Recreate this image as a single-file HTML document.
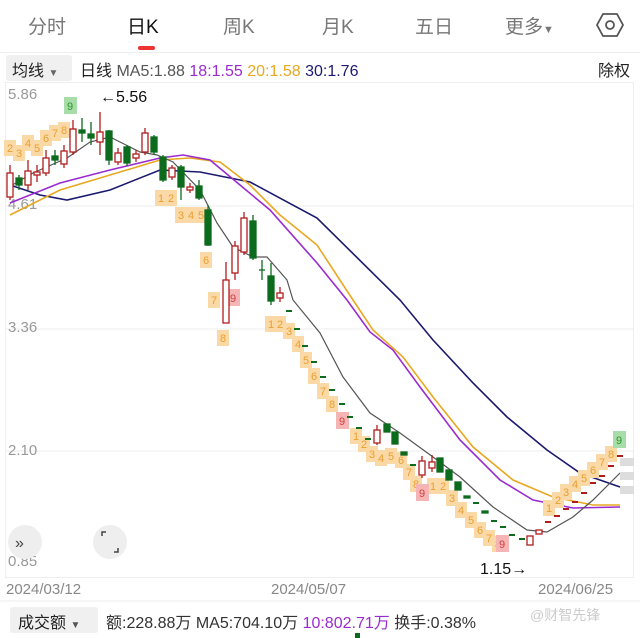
<!DOCTYPE html>
<html><head><meta charset="utf-8"><style>
body{margin:0;width:640px;height:638px;background:#fff;overflow:hidden;font-family:"Liberation Sans","Noto Sans CJK SC",sans-serif;position:relative}
.a{position:absolute;white-space:nowrap}
</style></head><body>
<div class="a" style="left:28px;top:12px;font-size:19px;color:#777">分时</div>
<div class="a" style="left:127px;top:12px;font-size:19px;color:#111">日K</div>
<div class="a" style="left:138px;top:46px;width:17px;height:4px;background:#e33;border-radius:2px"></div>
<div class="a" style="left:223px;top:12px;font-size:19px;color:#777">周K</div>
<div class="a" style="left:322px;top:12px;font-size:19px;color:#777">月K</div>
<div class="a" style="left:415px;top:12px;font-size:19px;color:#777">五日</div>
<div class="a" style="left:505px;top:12px;font-size:19px;color:#777">更多<span style="font-size:11px">▼</span></div>
<svg class="a" style="left:595px;top:10px" width="30" height="30"><polygon points="8,4 22,4 28,15 22,26 8,26 2,15" fill="none" stroke="#555" stroke-width="1.8"/><circle cx="15" cy="15" r="4" fill="none" stroke="#555" stroke-width="1.8"/></svg>
<div class="a" style="left:0;top:52px;width:640px;height:1px;background:#eee"></div>
<div class="a" style="left:6px;top:55px;width:66px;height:26px;background:#f0f0f0;border-radius:3px"></div>
<div class="a" style="left:12px;top:57px;font-size:16px;color:#222">均线 <span style="font-size:10px;color:#666">▼</span></div>
<div class="a" style="left:80px;top:57px;font-size:16px;color:#222">日线 <span style="color:#555">MA5:1.88</span> <span style="color:#9a2bd0">18:1.55</span> <span style="color:#e8a820">20:1.58</span> <span style="color:#1c1a6e">30:1.76</span></div>
<div class="a" style="left:598px;top:57px;font-size:16px;color:#222">除权</div>
<svg class="a" style="left:0;top:0" width="640" height="638">
<rect x="5.5" y="82.5" width="628" height="495" fill="none" stroke="#eee"/>
<g stroke="#eee"><line x1="6" y1="206" x2="633" y2="206"/><line x1="6" y1="329" x2="633" y2="329"/><line x1="6" y1="451" x2="633" y2="451"/></g>
<g font-size="15" fill="#999"><text x="8" y="99">5.86</text><text x="8" y="209">4.61</text><text x="8" y="332">3.36</text><text x="8" y="455">2.10</text><text x="8" y="566">0.85</text></g>
<text x="100" y="102" font-size="16" fill="#111">←5.56</text>
<text x="480" y="574" font-size="16" fill="#111">1.15→</text>
<g fill="none" stroke-width="1.6">
<polyline stroke="#1c1a6e" points="10,185 40,195 67,200 110,190 160,170 200,172 250,182 317,218 400,300 433,340 473,383 507,417 547,450 580,473 620,487"/>
<polyline stroke="#e8a820" points="10,215 60,190 110,175 160,160 190,158 220,162 250,185 280,215 317,245 353,300 373,330 403,357 433,397 473,447 513,480 553,497 593,505 620,505"/>
<polyline stroke="#9a2bd0" points="10,203 60,183 110,170 160,158 183,155 210,160 240,185 270,210 317,263 347,300 370,332 393,350 420,387 460,440 500,480 533,500 573,508 620,507"/>
<polyline stroke="#555" stroke-width="1.2" points="7,188 33,173 67,158 90,142 110,137 140,152 157,155 173,162 200,190 217,223 233,247 253,257 267,257 287,280 293,300 320,333 343,377 370,413 400,433 433,457 460,477 493,507 527,530 547,532 573,517 593,500 620,473"/>
</g>
<g font-size="11" text-anchor="middle">
<g fill="#fbd9a6"><rect x="4" y="140" width="12" height="16"/><rect x="13" y="145" width="12" height="16"/><rect x="22" y="135" width="12" height="16"/><rect x="31" y="140" width="12" height="16"/><rect x="40" y="130" width="12" height="16"/><rect x="49" y="125" width="12" height="16"/><rect x="58" y="122" width="12" height="16"/>
<rect x="155" y="190" width="12" height="16"/><rect x="165" y="190" width="12" height="16"/><rect x="175" y="207" width="12" height="16"/><rect x="185" y="207" width="12" height="16"/><rect x="195" y="207" width="12" height="16"/><rect x="200" y="252" width="12" height="16"/><rect x="208" y="292" width="12" height="16"/><rect x="217" y="330" width="12" height="16"/>
<rect x="265" y="316" width="12" height="16"/><rect x="274" y="316" width="12" height="16"/><rect x="283" y="323" width="12" height="16"/><rect x="292" y="336" width="12" height="16"/><rect x="300" y="352" width="12" height="16"/><rect x="308" y="368" width="12" height="16"/><rect x="317" y="383" width="12" height="16"/><rect x="326" y="396" width="12" height="16"/>
<rect x="350" y="428" width="12" height="16"/><rect x="358" y="436" width="12" height="16"/><rect x="366" y="446" width="12" height="16"/><rect x="375" y="450" width="12" height="16"/><rect x="385" y="448" width="12" height="16"/><rect x="395" y="452" width="12" height="16"/><rect x="403" y="464" width="12" height="16"/><rect x="410" y="476" width="12" height="16"/><rect x="427" y="478" width="12" height="16"/><rect x="437" y="478" width="12" height="16"/><rect x="446" y="490" width="12" height="16"/><rect x="455" y="502" width="12" height="16"/><rect x="465" y="512" width="12" height="16"/><rect x="474" y="522" width="12" height="16"/><rect x="483" y="530" width="12" height="16"/><rect x="492" y="536" width="12" height="16"/>
<rect x="543" y="500" width="12" height="16"/><rect x="552" y="492" width="12" height="16"/><rect x="560" y="484" width="12" height="16"/><rect x="569" y="476" width="12" height="16"/><rect x="578" y="470" width="12" height="16"/><rect x="587" y="462" width="12" height="16"/><rect x="596" y="454" width="12" height="16"/><rect x="605" y="446" width="12" height="16"/></g>
<g fill="#e8a030"><text x="10" y="152">2</text><text x="19" y="157">3</text><text x="28" y="147">4</text><text x="37" y="152">5</text><text x="46" y="142">6</text><text x="55" y="137">7</text><text x="64" y="134">8</text>
<text x="161" y="202">1</text><text x="171" y="202">2</text><text x="181" y="219">3</text><text x="191" y="219">4</text><text x="201" y="219">5</text><text x="206" y="264">6</text><text x="214" y="304">7</text><text x="223" y="342">8</text>
<text x="271" y="328">1</text><text x="280" y="328">2</text><text x="289" y="335">3</text><text x="298" y="348">4</text><text x="306" y="364">5</text><text x="314" y="380">6</text><text x="323" y="395">7</text><text x="332" y="408">8</text>
<text x="356" y="440">1</text><text x="364" y="448">2</text><text x="372" y="458">3</text><text x="381" y="462">4</text><text x="391" y="460">5</text><text x="401" y="464">6</text><text x="409" y="476">7</text><text x="416" y="488">8</text><text x="433" y="490">1</text><text x="443" y="490">2</text><text x="452" y="502">3</text><text x="461" y="514">4</text><text x="471" y="524">5</text><text x="480" y="534">6</text><text x="489" y="542">7</text><text x="498" y="548">8</text>
<text x="549" y="512">1</text><text x="558" y="504">2</text><text x="566" y="496">3</text><text x="575" y="488">4</text><text x="584" y="482">5</text><text x="593" y="474">6</text><text x="602" y="466">7</text><text x="611" y="458">8</text></g>
<rect x="64" y="97" width="13" height="17" fill="#a8dca8"/><text x="70" y="110" fill="#2a9a2a">9</text>
<rect x="613" y="431" width="13" height="17" fill="#a8dca8"/><text x="619" y="444" fill="#2a9a2a">9</text>
<g fill="#f5b5b5"><rect x="227" y="289" width="13" height="17"/><rect x="336" y="412" width="13" height="17"/><rect x="416" y="484" width="13" height="17"/><rect x="496" y="535" width="13" height="17"/></g>
<g fill="#d24040"><text x="233" y="302">9</text><text x="342" y="425">9</text><text x="422" y="497">9</text><text x="502" y="548">9</text></g>
</g>
<g stroke="#b01c1c" stroke-width="1.3" fill="#fff">
<line x1="10" y1="165" x2="10" y2="200"/><rect x="7" y="173" width="6" height="24"/>
<line x1="28" y1="160" x2="28" y2="190"/><rect x="25" y="171" width="6" height="14"/>
<line x1="37" y1="165" x2="37" y2="182"/><rect x="34" y="172" width="6" height="3"/>
<line x1="46" y1="150" x2="46" y2="176"/><rect x="43" y="158" width="6" height="15"/>
<line x1="64" y1="145" x2="64" y2="168"/><rect x="61" y="151" width="6" height="13"/>
<line x1="73" y1="120" x2="73" y2="155"/><rect x="70" y="129" width="6" height="23"/>
<line x1="100" y1="112" x2="100" y2="155"/><rect x="97" y="132" width="6" height="10"/>
<line x1="118" y1="148" x2="118" y2="165"/><rect x="115" y="153" width="6" height="9"/>
<line x1="136" y1="150" x2="136" y2="162"/><rect x="133" y="154" width="6" height="4"/>
<line x1="145" y1="128" x2="145" y2="155"/><rect x="142" y="133" width="6" height="19"/>
<line x1="172" y1="165" x2="172" y2="180"/><rect x="169" y="168" width="6" height="9"/>
<line x1="190" y1="183" x2="190" y2="193"/><rect x="187" y="187" width="6" height="3"/>
<line x1="226" y1="262" x2="226" y2="323"/><rect x="223" y="280" width="6" height="43"/>
<line x1="235" y1="241" x2="235" y2="280"/><rect x="232" y="246" width="6" height="27"/>
<line x1="244" y1="212" x2="244" y2="255"/><rect x="241" y="218" width="6" height="34"/>
<line x1="280" y1="287" x2="280" y2="302"/><rect x="277" y="293" width="6" height="5"/>
<line x1="377" y1="425" x2="377" y2="445"/><rect x="374" y="430" width="6" height="13"/>
<line x1="422" y1="456" x2="422" y2="478"/><rect x="419" y="461" width="6" height="14"/>
<line x1="432" y1="455" x2="432" y2="472"/><rect x="429" y="462" width="6" height="6"/>
<rect x="527" y="536" width="6" height="9"/><rect x="536" y="530" width="6" height="4"/>
</g>
<g stroke="#b01c1c" stroke-width="2"><line x1="545" y1="522" x2="551" y2="522"/><line x1="554" y1="516" x2="560" y2="516"/><line x1="563" y1="509" x2="569" y2="509"/><line x1="572" y1="502" x2="578" y2="502"/><line x1="581" y1="493" x2="587" y2="493"/><line x1="590" y1="483" x2="596" y2="483"/><line x1="599" y1="476" x2="605" y2="476"/><line x1="608" y1="466" x2="614" y2="466"/><line x1="617" y1="456" x2="623" y2="456"/></g>
<g stroke="#0d6b1e" stroke-width="1.3" fill="#0d6b1e">
<line x1="19" y1="175" x2="19" y2="190"/><rect x="16" y="178" width="6" height="7"/>
<line x1="55" y1="150" x2="55" y2="165"/><rect x="52" y="156" width="6" height="4"/>
<line x1="82" y1="118" x2="82" y2="142"/><rect x="79" y="130" width="6" height="3"/>
<line x1="91" y1="122" x2="91" y2="145"/><rect x="88" y="134" width="6" height="4"/>
<line x1="109" y1="130" x2="109" y2="165"/><rect x="106" y="131" width="6" height="29"/>
<line x1="127" y1="145" x2="127" y2="166"/><rect x="124" y="147" width="6" height="16"/>
<line x1="154" y1="135" x2="154" y2="155"/><rect x="151" y="137" width="6" height="15"/>
<line x1="163" y1="155" x2="163" y2="182"/><rect x="160" y="157" width="6" height="23"/>
<line x1="181" y1="165" x2="181" y2="200"/><rect x="178" y="167" width="6" height="20"/>
<line x1="199" y1="180" x2="199" y2="200"/><rect x="196" y="186" width="6" height="12"/>
<line x1="208" y1="205" x2="208" y2="246"/><rect x="205" y="210" width="6" height="35"/>
<line x1="253" y1="215" x2="253" y2="260"/><rect x="250" y="221" width="6" height="37"/>
<line x1="262" y1="260" x2="262" y2="280"/><line x1="259" y1="270" x2="265" y2="270"/>
<line x1="271" y1="263" x2="271" y2="305"/><rect x="268" y="276" width="6" height="25"/>
<rect x="384" y="424" width="6" height="8"/><rect x="392" y="432" width="6" height="12"/><rect x="401" y="452" width="6" height="3"/>
<rect x="437" y="458" width="6" height="14"/><rect x="446" y="470" width="6" height="10"/><rect x="455" y="482" width="6" height="8"/><rect x="464" y="496" width="6" height="2"/><rect x="482" y="511" width="6" height="2"/>
</g>
<g stroke="#0d6b1e" stroke-width="2"><line x1="286" y1="311" x2="292" y2="311"/><line x1="294" y1="329" x2="300" y2="329"/><line x1="302" y1="346" x2="308" y2="346"/><line x1="311" y1="362" x2="317" y2="362"/><line x1="320" y1="377" x2="326" y2="377"/><line x1="329" y1="390" x2="335" y2="390"/><line x1="339" y1="404" x2="345" y2="404"/><line x1="347" y1="417" x2="353" y2="417"/><line x1="356" y1="428" x2="362" y2="428"/><line x1="365" y1="439" x2="371" y2="439"/><line x1="410" y1="465" x2="416" y2="465"/><line x1="473" y1="503" x2="479" y2="503"/><line x1="491" y1="521" x2="497" y2="521"/><line x1="500" y1="527" x2="506" y2="527"/><line x1="509" y1="535" x2="515" y2="535"/><line x1="519" y1="539" x2="525" y2="539"/></g>
<rect x="620" y="458" width="14" height="8" fill="#ddd"/><rect x="620" y="472" width="14" height="8" fill="#ddd"/><rect x="620" y="486" width="14" height="8" fill="#ddd"/>
<circle cx="25" cy="542" r="17" fill="#eee"/><text x="15" y="548" font-size="16" fill="#444">»</text>
<circle cx="110" cy="542" r="17" fill="#eee"/><path d="M102 536v-4h4M118 548v4h-4" stroke="#444" stroke-width="1.5" fill="none"/>
<g font-size="15" fill="#888"><text x="6" y="594">2024/03/12</text><text x="271" y="594">2024/05/07</text><text x="538" y="594">2024/06/25</text></g>
<line x1="0" y1="601" x2="640" y2="601" stroke="#eee"/>
<rect x="10" y="607" width="88" height="26" rx="3" fill="#f0f0f0"/>
<rect x="355" y="633" width="5" height="5" fill="#0d6b1e"/>
</svg>
<div class="a" style="left:18px;top:609px;font-size:16px;color:#222">成交额 <span style="font-size:10px;color:#555">▼</span></div>
<div class="a" style="left:106px;top:609px;font-size:16px;color:#333">额:228.88万 MA5:704.10万 <span style="color:#9a2bd0">10:802.71万</span> 换手:0.38%</div>
<div class="a" style="left:530px;top:605px;font-size:14px;color:#ccc">@财智先锋</div>
</body></html>
